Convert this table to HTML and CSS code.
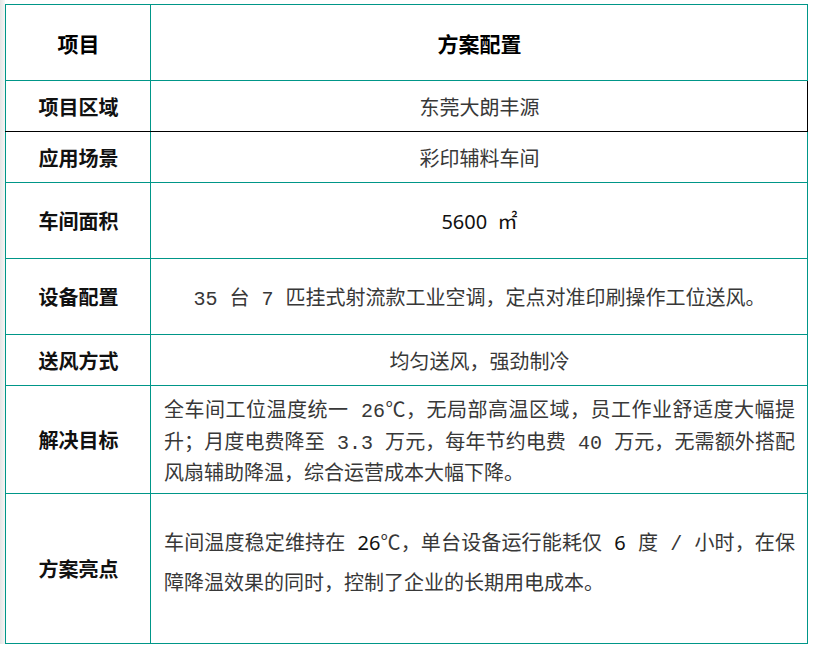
FILE: index.html
```html
<!DOCTYPE html>
<html lang="zh-CN">
<head>
<meta charset="utf-8">
<title>方案配置</title>
<link rel="stylesheet" href="styles.css">
</head>
<body>
<div class="edge"></div>
<table class="spec">
  <colgroup><col class="c1"><col class="c2"></colgroup>
  <tr class="r-head">
    <th>项目</th>
    <th>方案配置</th>
  </tr>
  <tr class="r-s r-dark">
    <td class="k">项目区域</td>
    <td class="v">东莞大朗丰源</td>
  </tr>
  <tr class="r-s">
    <td class="k">应用场景</td>
    <td class="v">彩印辅料车间</td>
  </tr>
  <tr class="r-m">
    <td class="k">车间面积</td>
    <td class="v"><span class="num">5600&nbsp;&nbsp;㎡</span></td>
  </tr>
  <tr class="r-m">
    <td class="k">设备配置</td>
    <td class="v">35 台 7 匹挂式射流款工业空调，定点对准印刷操作工位送风。</td>
  </tr>
  <tr class="r-s">
    <td class="k">送风方式</td>
    <td class="v">均匀送风，强劲制冷</td>
  </tr>
  <tr class="r-l">
    <td class="k">解决目标</td>
    <td class="v"><p class="para goal">全车间工位温度统一 26℃，无局部高温区域，员工作业舒适度大幅提升；月度电费降至 3.3 万元，每年节约电费 40 万元，无需额外搭配风扇辅助降温，综合运营成本大幅下降。</p></td>
  </tr>
  <tr class="r-xl">
    <td class="k">方案亮点</td>
    <td class="v"><p class="para wide">车间温度稳定维持在 <span class="num">26</span>℃，单台设备运行能耗仅 <span class="num">6</span> 度 / 小时，在保障降温效果的同时，控制了企业的长期用电成本。</p></td>
  </tr>
</table>
</body>
</html>
```

FILE: styles.css
```css
html, body {
  margin: 0;
  padding: 0;
  background: #ffffff;
}
body {
  padding: 4px 0 0 5px;
  font-family: "Noto Sans CJK SC", "Noto Sans", sans-serif;
  position: relative;
}
.edge {
  position: absolute;
  left: 0;
  top: 0;
  width: 5px;
  height: 648px;
  background: linear-gradient(to right, #e4e4e4, #f6f6f6);
}
.spec {
  border-collapse: collapse;
  width: 803px;
  table-layout: fixed;
}
.c1 { width: 145px; }
.spec th, .spec td {
  border: 1.5px solid #009688;
  padding: 0 12px 0 13px;
  text-align: center;
  vertical-align: middle;
}
.spec th {
  font-size: 21px;
  font-weight: 700;
  color: #000;
}
.r-head { height: 76px; }
.r-s { height: 51px; }
.r-m { height: 76px; }
.r-l { height: 108px; }
.r-xl { height: 150px; }
.r-dark td {
  border-top-color: #000;
  border-bottom-color: #000;
}
.r-dark td.v { border-right-color: #000; }
.k {
  font-size: 20px;
  font-weight: 700;
  color: #111;
}
.v {
  font-family: "Liberation Mono", "Noto Sans CJK SC", monospace;
  font-size: 20px;
  color: #383838;
  font-weight: 400;
}
.num {
  font-family: "Noto Sans", "Noto Sans CJK SC", sans-serif;
  color: #111;
}
.para {
  margin: 0;
  text-align: justify;
  text-align-last: left;
  text-justify: inter-character;
  text-indent: 0;
  line-height: 31.5px;
}
.para.goal {
  padding-top: 8px;
}
.para.wide {
  line-height: 40px;
  padding-bottom: 10px;
}
```
